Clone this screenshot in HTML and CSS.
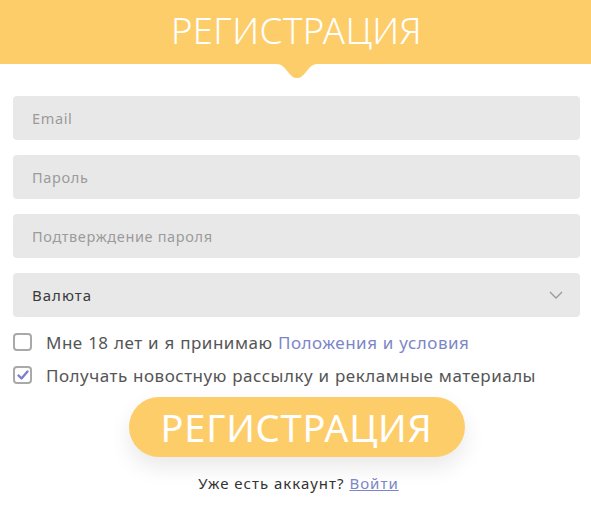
FILE: index.html
```html
<!DOCTYPE html>
<html lang="ru">
<head>
<meta charset="utf-8">
<title>Регистрация</title>
<link rel="stylesheet" href="styles.css">
</head>
<body>
<header class="head">
  <h1 class="head-title">РЕГИСТРАЦИЯ</h1>
  <svg class="notch" width="42" height="15" viewBox="0 0 42 15" aria-hidden="true">
    <path d="M0 0 H42 C36 0 34 3 30 8 C26 13 24 14 21 14 C18 14 16 13 12 8 C8 3 6 0 0 0 Z" fill="#fdcd6a"/>
  </svg>
</header>
<form class="form">
  <div class="field"><span class="ph">Email</span></div>
  <div class="field"><span class="ph">Пароль</span></div>
  <div class="field"><span class="ph">Подтверждение пароля</span></div>
  <div class="field select">
    <span class="val">Валюта</span>
    <svg class="chev" width="14" height="8" viewBox="0 0 14 8" aria-hidden="true"><path d="M1 1 L7 7 L13 1" fill="none" stroke="#9a9a9a" stroke-width="1.4"/></svg>
  </div>
  <label class="check">
    <span class="box"></span>
    <span class="check-text">Мне 18 лет и я принимаю <a class="link" href="#">Положения и условия</a></span>
  </label>
  <label class="check last">
    <span class="box">
      <svg width="14" height="12" viewBox="0 0 14 12" aria-hidden="true"><path d="M2.5 6.5 L5.5 9.5 L11.5 2.5" fill="none" stroke="#7a7fce" stroke-width="2.4" stroke-linecap="round" stroke-linejoin="round"/></svg>
    </span>
    <span class="check-text">Получать новостную рассылку и рекламные материалы</span>
  </label>
  <div class="btn-row"><button type="button" class="btn">РЕГИСТРАЦИЯ</button></div>
  <p class="login">Уже есть аккаунт? <a class="link" href="#">Войти</a></p>
</form>
</body>
</html>
```
FILE: styles.css
```css
html, body {
  margin: 0;
  padding: 0;
  background: #ffffff;
  font-family: "Noto Sans", "DejaVu Sans", sans-serif;
}
.head {
  position: relative;
  height: 64px;
  background: #fdcd6a;
  display: flex;
  align-items: center;
  justify-content: center;
}
.head-title {
  margin: 0;
  color: #ffffff;
  font-weight: 300;
  font-size: 36.5px;
  letter-spacing: 0.4px;
  line-height: 1;
  transform: translate(1px, -2px);
}
.notch {
  position: absolute;
  left: 276px;
  top: 64px;
  display: block;
}
.form {
  margin: 0;
  padding: 32px 11px 0 13px;
  display: flex;
  flex-direction: column;
}
.field {
  height: 44px;
  background: #e8e8e8;
  border-radius: 4px;
  display: flex;
  align-items: center;
  padding: 0 16px 0 19px;
  margin-bottom: 15px;
  box-sizing: border-box;
}
.ph {
  color: #9b9b9b;
  font-size: 14.5px;
  letter-spacing: 0.65px;
}
.select {
  justify-content: space-between;
  margin-bottom: 16px;
}
.val {
  color: #3a3a3a;
  font-size: 15px;
  letter-spacing: 1px;
}
.chev {
  display: block;
  margin-right: 1px;
}
.check {
  display: flex;
  align-items: center;
  gap: 14px;
  height: 18px;
  margin-bottom: 15px;
}
.check.last {
  margin-bottom: 13px;
}
.box {
  width: 19px;
  height: 18px;
  box-sizing: border-box;
  border: 2px solid #a9a9a9;
  border-radius: 4px;
  display: flex;
  align-items: center;
  justify-content: center;
  flex: none;
}
.box svg { display: block; }
.check-text {
  color: #555555;
  font-size: 17px;
  letter-spacing: 0.5px;
  word-spacing: 0.5px;
}
.link {
  color: #7c86c7;
  text-decoration: none;
}
.btn-row {
  display: flex;
  justify-content: center;
}
.btn {
  width: 336px;
  height: 60px;
  border: none;
  border-radius: 30px;
  background: #fdcd6a;
  color: #ffffff;
  font-family: inherit;
  font-size: 38px;
  font-weight: 400;
  letter-spacing: 0.7px;
  box-shadow: 0 10px 22px rgba(0, 0, 0, 0.09);
  padding: 0;
}
.login {
  margin: 16px 0 0;
  text-align: center;
  padding-left: 4px;
  color: #333333;
  font-size: 15px;
  letter-spacing: 1px;
  line-height: 20px;
}
.login .link {
  text-decoration: underline;
}
```
